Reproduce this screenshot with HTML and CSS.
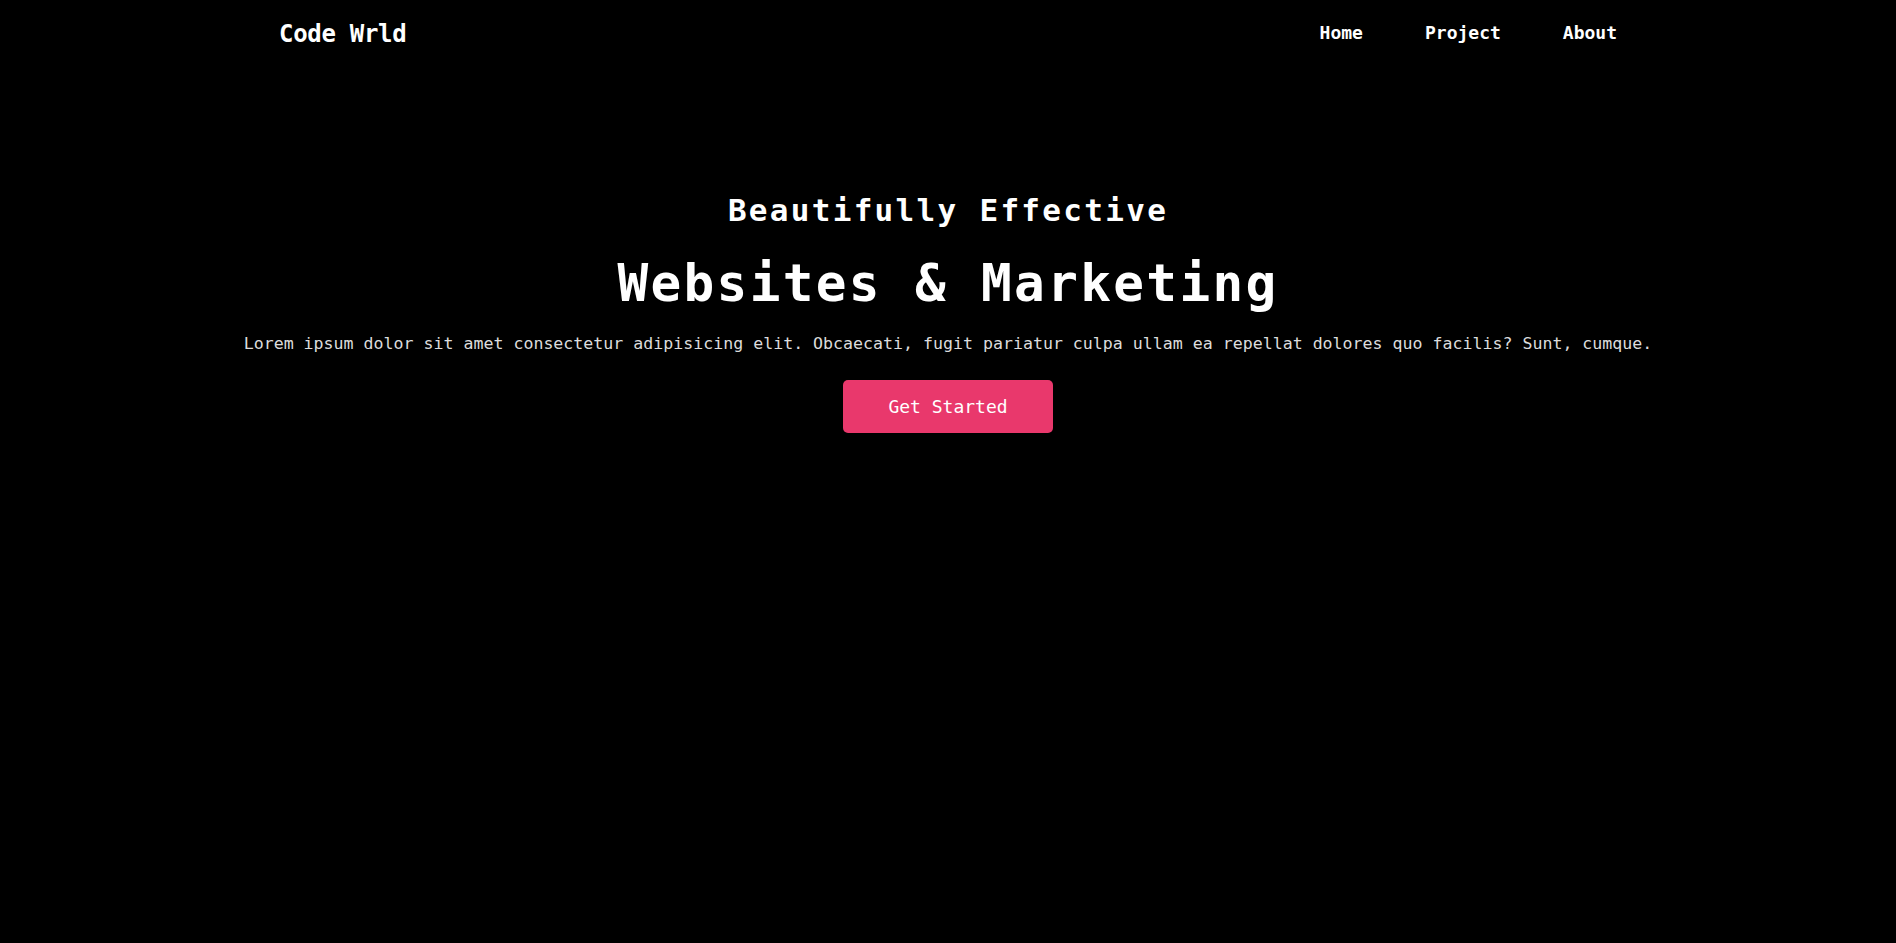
FILE: index.html
```html
<!DOCTYPE html>
<html lang="en">
<head>
<meta charset="utf-8">
<title>Code Wrld</title>
<link rel="stylesheet" href="styles.css">
</head>
<body>
<nav class="navbar">
  <div class="nav-inner">
    <a class="logo" href="#">Code Wrld</a>
    <ul class="nav-menu">
      <li><a class="nav-link" href="#">Home</a></li>
      <li><a class="nav-link" href="#">Project</a></li>
      <li><a class="nav-link" href="#">About</a></li>
    </ul>
  </div>
</nav>
<section class="hero">
  <h2 class="hero-sub">Beautifully Effective</h2>
  <h1 class="hero-title">Websites &amp; Marketing</h1>
  <p class="hero-text">Lorem ipsum dolor sit amet consectetur adipisicing elit. Obcaecati, fugit pariatur culpa ullam ea repellat dolores quo facilis? Sunt, cumque.</p>
  <a class="btn" href="#">Get Started</a>
</section>
</body>
</html>
```
FILE: styles.css
```css
* { box-sizing: border-box; margin: 0; padding: 0; }
html, body { background: #000; }
body {
  font-family: "DejaVu Sans Mono", "Liberation Mono", monospace;
  color: #fff;
  min-height: 943px;
}
a { text-decoration: none; color: inherit; }

.navbar { height: 66px; display: flex; justify-content: center; }
.nav-inner {
  width: 1340px;
  display: flex;
  align-items: center;
  justify-content: space-between;
}
.logo { font-size: 24px; font-weight: 700; line-height: 1; letter-spacing: -0.3px; margin-top: 1px; margin-left: 1px; }
.nav-menu { list-style: none; display: flex; align-items: center; }
.nav-link {
  display: block;
  font-size: 18px;
  font-weight: 700;
  line-height: 1;
  padding: 0 31px;
}
.nav-menu li:last-child .nav-link { padding-right: 1px; }

.hero {
  padding-top: 129px;
  display: flex;
  flex-direction: column;
  align-items: center;
  text-align: center;
}
.hero-sub {
  font-size: 31px;
  font-weight: 700;
  line-height: 1;
  letter-spacing: 2.3px;
}
.hero-title {
  margin-top: 32px;
  font-size: 51px;
  font-weight: 700;
  line-height: 1;
  letter-spacing: 2.35px;
}
.hero-text {
  margin-top: 27px;
  font-size: 16.6px;
  line-height: 1;
  color: #dcdcdc;
}
.btn {
  margin-top: 27px;
  width: 210px;
  height: 53px;
  display: flex;
  align-items: center;
  justify-content: center;
  background: #e9386c;
  border-radius: 5px;
  font-size: 18px;
  color: #fff;
}
```
